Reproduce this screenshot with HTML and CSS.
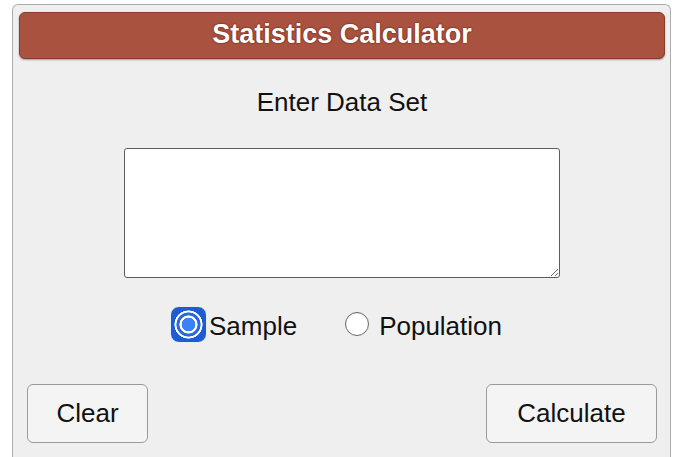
FILE: index.html
```html
<!DOCTYPE html>
<html lang="en">
<head>
<meta charset="utf-8">
<title>Statistics Calculator</title>
<link rel="stylesheet" href="styles.css">
</head>
<body>
<div class="panel">
  <div class="header">Statistics Calculator</div>
  <div class="label">Enter Data Set</div>
  <textarea class="data"></textarea>
  <div class="radios">
    <label class="opt">
      <input type="radio" name="kind" class="radio radio-checked" checked>
      <span class="opt-text opt-text-sample">Sample</span>
    </label>
    <label class="opt">
      <input type="radio" name="kind" class="radio radio-plain">
      <span class="opt-text opt-text-pop">Population</span>
    </label>
  </div>
  <div class="actions">
    <button class="btn btn-clear">Clear</button>
    <button class="btn btn-calc">Calculate</button>
  </div>
</div>
</body>
</html>
```
FILE: styles.css
```css
html, body {
  margin: 0;
  padding: 0;
  height: 457px;
  overflow: hidden;
  background: #ffffff;
}

body {
  font-family: "Liberation Sans", Arial, sans-serif;
  color: #111;
}

.panel {
  margin: 4px 9px 0 12px;
  height: 453px;
  box-sizing: border-box;
  border: 1px solid #acacac;
  border-bottom: none;
  border-radius: 6px 6px 0 0;
  background: #efefef;
  padding: 7px 5px 0 6px;
  display: flex;
  flex-direction: column;
}

.header {
  flex: none;
  height: 47px;
  box-sizing: border-box;
  border: 1px solid #8c3b2b;
  border-radius: 6px;
  background: #a8523f;
  box-shadow: 0 1px 2px rgba(0, 0, 0, 0.35);
  color: #fff;
  font-weight: bold;
  font-size: 27px;
  line-height: 42px;
  padding-bottom: 3px;
  text-align: center;
  text-shadow: 0 0 2px #6e1c0e, 0 0 1px #6e1c0e;
}

.label {
  margin-top: 28px;
  font-size: 26px;
  line-height: 30px;
  text-align: center;
  color: #111;
}

.data {
  flex: none;
  display: block;
  margin: 31px auto 0;
  width: 436px;
  height: 130px;
  box-sizing: border-box;
  border: 1px solid #5c5c5c;
  border-radius: 3px;
  background: #fff;
  padding: 2px;
  font-family: "Liberation Sans", Arial, sans-serif;
  font-size: 16px;
}

.radios {
  flex: none;
  margin-top: 28px;
  display: flex;
  justify-content: center;
  align-items: center;
  padding-right: 12px;
  height: 36px;
}

.opt {
  display: flex;
  align-items: center;
}

.opt + .opt {
  margin-left: 48px;
}

.radio {
  -webkit-appearance: none;
  appearance: none;
  margin: 0;
  padding: 0;
  box-sizing: border-box;
  flex: none;
}

.radio-checked {
  width: 37px;
  height: 37px;
  border-radius: 9px;
  border: 1px solid #e6edf9;
  background: radial-gradient(circle at center,
    #3b82f6 0 6.6px,
    #ffffff 7.1px 8.8px,
    #2a6ae0 9.3px 11.8px,
    #ffffff 12.3px 13.8px,
    #1e5ccf 14.3px);
}

.radio-plain {
  width: 24px;
  height: 24px;
  border-radius: 50%;
  border: 1.5px solid #666;
  background: #fff;
  box-shadow: inset 0 1px 1px rgba(0, 0, 0, 0.08);
}

.opt-text {
  font-size: 26px;
  line-height: 30px;
  margin-top: 4px;
  color: #111;
}

.opt-text-sample {
  margin-left: 2px;
}

.opt-text-pop {
  margin-left: 10px;
}

.actions {
  flex: none;
  margin-top: 42px;
  display: flex;
  justify-content: space-between;
  padding: 0 8px 0 8px;
}

.btn {
  height: 59px;
  box-sizing: border-box;
  border: 1px solid #9a9a9a;
  border-radius: 6px;
  background: #f4f4f4;
  font-family: "Liberation Sans", Arial, sans-serif;
  font-size: 26px;
  color: #111;
  padding: 0;
  text-align: center;
}

.btn-clear {
  width: 121px;
}

.btn-calc {
  width: 171px;
}
```
